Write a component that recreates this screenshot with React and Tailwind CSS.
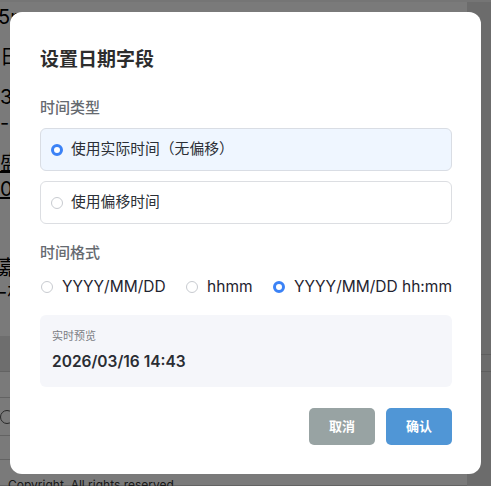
import React, { useState } from 'react';

const font = { fontFamily: 'Inter, "Noto Sans CJK SC", sans-serif' };

const Radio = ({ checked }) => (
  <span
    className={`inline-block shrink-0 w-[12px] h-[12px] rounded-full box-border ${
      checked ? 'border-[3.5px] border-[#3b82f6] bg-white' : 'border border-[#c8cbd0] bg-white'
    }`}
  />
);

const TypeOption = ({ label, checked, onClick }) => (
  <button
    onClick={onClick}
    className={`w-full h-[43px] flex items-center gap-[8px] px-[10px] rounded-[6px] border text-left ${
      checked ? 'bg-[#eff6ff] border-[#d9dde4]' : 'bg-white border-[#dcdee2]'
    }`}
  >
    <Radio checked={checked} />
    <span className="text-[14.8px] text-[#2b2f36]">{label}</span>
  </button>
);

const FormatOption = ({ label, checked, onClick }) => (
  <button onClick={onClick} className="flex items-center gap-[9px]">
    <Radio checked={checked} />
    <span className="text-[15.5px] text-[#1f2430]">{label}</span>
  </button>
);

const App = () => {
  const [type, setType] = useState('real');
  const [format, setFormat] = useState('full');

  return (
    <div className="relative w-[491px] h-[486px] overflow-hidden bg-white" style={font}>
      {/* page behind the dialog */}
      <div className="flex flex-col h-full text-[20px] text-black">
        <div className="h-[12px] bg-[#f4f4f4]" />
        <div className="flex flex-1">
          <div className="flex-1 flex flex-col">
            <div className="flex flex-col gap-[14px] pt-[2px] leading-[26px]">
              <span className="-ml-[2px]">5n</span>
              <span>日区</span>
              <span>3<br />-</span>
              <span className="underline">盛<br />0.</span>
            </div>
            <div className="mt-[54px] leading-[24px] -ml-[2px]">
              <span>嘉<br />-林</span>
            </div>
            <div className="mt-[32px] flex flex-col">
              <div className="h-[36px] bg-[#e5e5e5] border-b border-[#cfcfcf]" />
              <div className="h-[26px] border-b border-[#d0d0d0]" />
              <div className="h-[38px] border-b border-[#d0d0d0] flex items-center">
                <span className="w-[14px] h-[14px] rounded-full border border-[#555]" />
              </div>
              <div className="h-[24px] border-b border-[#d0d0d0]" />
              <div className="h-[26px] border-b border-[#d0d0d0]" />
            </div>
          </div>
          <div className="w-[24px] bg-[#e2e2e2] flex flex-col">
            <div className="h-[352px]" />
            <div className="h-[18px] border-y border-[#c4c4c4]" />
          </div>
        </div>
        <div className="absolute left-0 bottom-[-6px] pl-[8px] text-[12px] text-[#333] leading-[14px]">
          Copyright. All rights reserved
        </div>
      </div>

      {/* overlay */}
      <div className="absolute inset-0 bg-[rgba(0,0,0,0.52)]" />

      {/* dialog */}
      <div className="absolute left-[10px] top-[12px] w-[471px] h-[462px] bg-white rounded-[12px] pl-[30px] pr-[29px] pt-[37px] flex flex-col">
        <h2 className="text-[19px] font-bold text-[#2d2d2d] leading-[22px]">设置日期字段</h2>

        <div className="mt-[28px] text-[15px] font-medium text-[#666a70] leading-[18px]">时间类型</div>
        <div className="mt-[11px] flex flex-col gap-[10px]">
          <TypeOption label="使用实际时间（无偏移）" checked={type === 'real'} onClick={() => setType('real')} />
          <TypeOption label="使用偏移时间" checked={type === 'offset'} onClick={() => setType('offset')} />
        </div>

        <div className="mt-[20px] text-[15px] font-medium text-[#666a70] leading-[18px]">时间格式</div>
        <div className="mt-[13px] pl-[1px] flex items-center justify-between">
          <FormatOption label="YYYY/MM/DD" checked={format === 'date'} onClick={() => setFormat('date')} />
          <FormatOption label="hhmm" checked={format === 'hhmm'} onClick={() => setFormat('hhmm')} />
          <FormatOption label="YYYY/MM/DD hh:mm" checked={format === 'full'} onClick={() => setFormat('full')} />
        </div>

        <div className="mt-[17px] h-[72px] bg-[#f5f6fa] rounded-[6px] px-[12px] pt-[14px]">
          <div className="text-[11px] text-[#7a7d83] leading-[14px]">实时预览</div>
          <div className="mt-[9px] text-[15.5px] font-semibold text-[#2a2d33] leading-[20px]">2026/03/16 14:43</div>
        </div>

        <div className="mt-[21px] flex justify-end gap-[11px]">
          <button className="w-[66px] h-[37px] rounded-[5px] bg-[#98a3a3] text-white text-[13px] font-bold">取消</button>
          <button className="w-[66px] h-[37px] rounded-[5px] bg-[#5096d6] text-white text-[13px] font-bold">确认</button>
        </div>
      </div>
    </div>
  );
};

export default App;
